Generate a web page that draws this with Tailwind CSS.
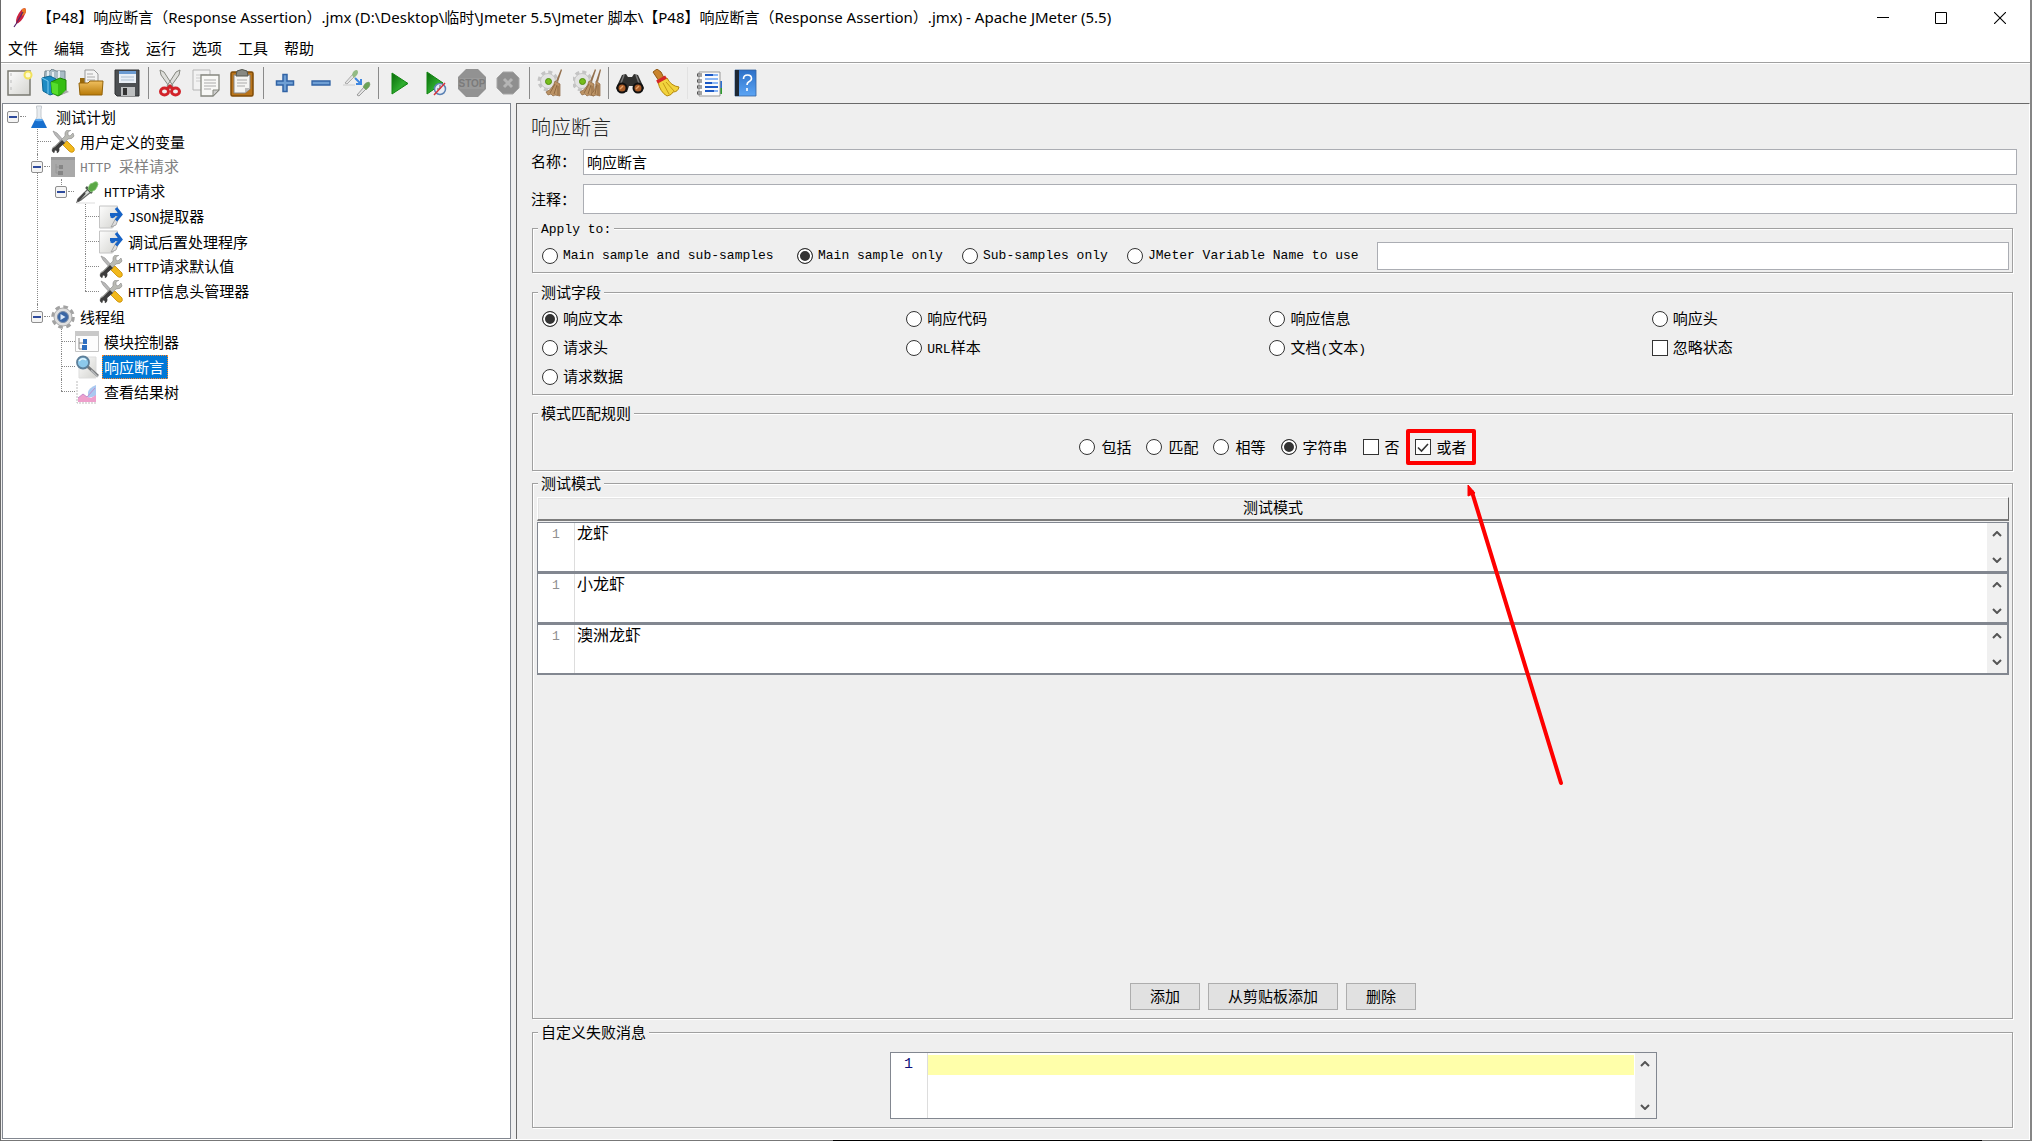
<!DOCTYPE html>
<html lang="zh-CN">
<head>
<meta charset="utf-8">
<meta name="viewport" content="width=device-width, initial-scale=1">
<title>响应断言 - Apache JMeter (5.5)</title>
<script src="https://cdn.jsdelivr.net/npm/@tailwindcss/browser@4"></script>
</head>
<body class="bg-[#efefef] text-black">
<svg class="absolute size-0" aria-hidden="true">
  <defs>
    <linearGradient id="sheet" x1="0" y1="0" x2="1" y2="1"><stop offset="0" stop-color="#fdfdfd"/><stop offset="1" stop-color="#d4d4d0"/></linearGradient>
    <linearGradient id="gold" x1="0" y1="0" x2="0" y2="1"><stop offset="0" stop-color="#f0c060"/><stop offset="1" stop-color="#b87a08"/></linearGradient>
    <linearGradient id="leaf" x1="0" y1="0" x2="1" y2="1"><stop offset="0" stop-color="#0a6a0a"/><stop offset=".6" stop-color="#2fae2f"/><stop offset="1" stop-color="#0c7a0c"/></linearGradient>
    <linearGradient id="book" x1="0" y1="0" x2="0" y2="1"><stop offset="0" stop-color="#2c70c8"/><stop offset="1" stop-color="#5ba4f4"/></linearGradient>
  </defs>
  <symbol id="tools" viewBox="0 0 24 24">
    <path d="M2 1l4 2 8 9-2 2L4 5z" fill="#b8b8b8" stroke="#888" stroke-width=".6"/>
    <path d="M13 13l3-2 7 7q1 3-1 4-2 1-4-1l-6-6z" fill="#f2b91c" stroke="#c78a00" stroke-width=".8"/>
    <path d="M22 3l-3 3-2-1 0-3 3-2q-5-1-6 3v3L4 16q-3 1-3 4 0 2 2 3l1-3 2 1 0 2q3-1 2-5L17 9q5 0 6-3z" fill="#b9bab4" stroke="#888" stroke-width=".6"/>
    <path d="M11 10L4 17q-3 1-3 4l2 2 1-3 2 1v2q3-1 2-5l6-5z" fill="#3d3d3d"/>
  </symbol>
  <symbol id="dropper" viewBox="0 0 24 24">
    <path d="M3 19L13 9l3 3L6 20l-4 2z" fill="#d9ddd9" stroke="#666" stroke-width="1.2"/>
    <path d="M3 21l7-8" stroke="#444" stroke-width="2"/>
    <path d="M11 7l6 6" stroke="#4d5a4d" stroke-width="2.5"/>
    <path d="M14 6q1-3 4-3 2-2 4-1 2 2 0 5-1 3-4 4l-2 1-3-3z" fill="#5aa845" stroke="#8cc77e" stroke-width=".8"/>
    <path d="M2 23h18" stroke="#ddd"/>
  </symbol>
  <symbol id="extract" viewBox="0 0 24 24">
    <path d="M.5 1h18v14l-5 8h-13z" fill="url(#sheet)" stroke="#c4c4c4"/>
    <path d="M12 22l6-11 2 1-3 8z" fill="#ddd" stroke="#999" stroke-width=".8"/>
    <path d="M11 9.500h10M17 3l5 6.500-5 6M16 9q-2 4-4 2" fill="none" stroke="#1763c6" stroke-width="3"/>
  </symbol>
  <symbol id="cog" viewBox="0 0 24 24">
    <circle cx="12" cy="12" r="9.800" fill="none" stroke="#a2a2a2" stroke-width="4" stroke-dasharray="4.400 3.300"/>
    <circle cx="12" cy="12" r="9" fill="#dedede" stroke="#ababab" stroke-width="1"/>
    <circle cx="12" cy="12" r="5.500" fill="#3a66a5" stroke="#7a8da8"/>
    <path d="M9.500 9l5 3-5 3z" fill="#dbe8f8"/>
  </symbol>
  <symbol id="broomy" viewBox="0 0 28 28">
    <circle cx="11" cy="12" r="8" fill="none" stroke="#c4c4c4" stroke-width="5" stroke-dasharray="3.600 2.680"/>
    <circle cx="11" cy="12" r="7.500" fill="#e3e3e3" stroke="#c5c5c5"/>
    <circle cx="11.500" cy="12.500" r="3" fill="#76bd1d" stroke="#528f10"/>
    <path d="M24 0l1 1-4 12-2-1z" fill="#94714e"/>
    <path d="M18 12l5 3v12l-5-1-2 1-2-2-3 1-2-3q7-3 9-11z" fill="#bc9365" stroke="#8d663f" stroke-width=".7"/>
    <path d="M18 15l-5 9M20 16l-3 9M21 17v9" stroke="#85603a" stroke-width=".8"/>
  </symbol>
</svg>

<div class="flex min-h-screen flex-col border-r-2 border-l border-r-[#858585] border-l-[#6a6a6a] bg-[#efefef] font-['Noto_Sans_CJK_SC',sans-serif] text-[15px]">

  <header class="bg-white">
    <div class="flex h-9 items-center pl-3">
      <svg class="mr-2.5 h-5 w-3.5 shrink-0" viewBox="0 0 14 20" aria-hidden="true"><path d="M12 0q2 2 0 6-3 8-9 10Q2 9 9 1z" fill="#cc2340"/><path d="M9 1l3-1q2 3 0 6l-3 2z" fill="#e97824"/><path d="M10 4L3 16l-2 3" fill="none" stroke="#57256b" stroke-width="1.200"/></svg>
      <h1 class="grow pb-0.5 font-['Noto_Sans','Noto_Sans_CJK_SC',sans-serif] text-[15px] leading-5 whitespace-nowrap">【P48】响应断言（Response Assertion）.jmx (D:\Desktop\临时\Jmeter 5.5\Jmeter 脚本\【P48】响应断言（Response Assertion）.jmx) - Apache JMeter (5.5)</h1>
      <button class="flex h-8 w-[58px] items-center justify-center" aria-label="最小化"><svg class="h-3 w-3" viewBox="0 0 12 12"><path d="M0 5.500h12" stroke="#000"/></svg></button>
      <button class="flex h-8 w-[58px] items-center justify-center" aria-label="最大化"><svg class="h-3 w-3" viewBox="0 0 12 12"><path d="M.5.500h11v11H.5z" fill="none" stroke="#000"/></svg></button>
      <button class="flex h-8 w-[60px] items-center justify-center" aria-label="关闭"><svg class="h-3 w-3" viewBox="0 0 12 12"><path d="M0 0l12 12M12 0L0 12" stroke="#000" stroke-width="1.100"/></svg></button>
    </div>
    <nav class="flex h-[27px] items-center gap-4 border-b border-[#a0a0a0] pb-px pl-[7px]">
      <button>文件</button><button>编辑</button><button>查找</button><button>运行</button><button>选项</button><button>工具</button><button>帮助</button>
    </nav>
  </header>

  <div class="flex h-10 items-center border-t border-white pb-px" role="toolbar">
    <button class="flex w-9 justify-center" aria-label="新建"><svg class="size-7" viewBox="0 0 28 28"><path d="M3 2h22v24H3z" fill="url(#sheet)" stroke="#7a7a72" stroke-width="1.500"/><path d="M6 4v20" stroke="#bbb" stroke-dasharray="3 4"/><circle cx="23" cy="6" r="3.500" fill="#fffbd0" stroke="#f2e25a" stroke-width="2"/></svg></button>
    <button class="flex w-9 justify-center" aria-label="模板"><svg class="size-7" viewBox="0 0 28 28"><path d="M4 2h5l2-2 4 2h9v13H3z" fill="#a9bcc6" stroke="#75868e"/><path d="M7 2v6M12 3v6M18 2v8" stroke="#e4ecf0" stroke-width="2"/><path d="M1 9l8-2 6 3v14l-6 2-7-4z" fill="#1c8bc4" stroke="#0c6694"/><path d="M1 9l6 3v13" fill="none" stroke="#7dcbf0"/><path d="M10 13l9-4 6 2v12l-8 4-6-3z" fill="#35bd12" stroke="#1c8205"/><path d="M10 13l7 2v11l-6-2z" fill="#56dd2c"/><path d="M20 26l8-3-3-2z" fill="#aaa"/></svg></button>
    <button class="flex w-9 justify-center" aria-label="打开"><svg class="size-7" viewBox="0 0 28 28"><path d="M3 9h7v4h14l1 12H3z" fill="#98690d"/><path d="M8 1h9l4 4v12H8z" fill="#f4f4f4" stroke="#999"/><path d="M10 5h6M10 8h8M10 11h8" stroke="#aaa"/><path d="M2 14h9l2-2h13l-1 14H3z" fill="url(#gold)" stroke="#946308"/></svg></button>
    <button class="flex w-9 justify-center" aria-label="保存"><svg class="size-7" viewBox="0 0 28 28"><path d="M2 1h24v26H4l-2-2z" fill="#4c4f52" stroke="#2e3032"/><path d="M6 2h17v12H6z" fill="#e9eff6"/><path d="M6 2h17v3H6z" fill="#6b9bd2"/><path d="M8 8h13M8 11h13" stroke="#aebfd0"/><path d="M8 18h14v9H8z" fill="#bdbfc0"/><path d="M10 19h4v7h-4z" fill="#333"/></svg></button>
    <span class="mx-[3px] h-8 w-px bg-[#8a8a8a]"></span>
    <button class="flex w-9 justify-center" aria-label="剪切"><svg class="size-7" viewBox="0 0 28 28"><path d="M4 1l4 2 9 14-2 3L5 6zM24 1l-4 2-9 14 2 3L23 6z" fill="#dedfdb" stroke="#85877f"/><ellipse cx="8.500" cy="22.500" rx="4" ry="3.500" fill="#efefef" stroke="#d2232a" stroke-width="3"/><ellipse cx="19.500" cy="22.500" rx="4" ry="3.500" fill="#efefef" stroke="#d2232a" stroke-width="3"/><path d="M11 20l3-3 3 3" fill="none" stroke="#d2232a" stroke-width="3"/></svg></button>
    <button class="flex w-9 justify-center" aria-label="复制"><svg class="size-7" viewBox="0 0 28 28"><path d="M1 1h17v20H1z" fill="#f2f2f2" stroke="#b5b5b5"/><path d="M4 6h11M4 9h11M4 12h11" stroke="#ccc"/><path d="M9 6h18v15l-6 6H9z" fill="#f8f8f6" stroke="#85877f" stroke-width="1.300"/><path d="M12 11h12M12 14h12M12 17h12M12 20h7" stroke="#aaa"/><path d="M21 27v-6h6z" fill="#ccc" stroke="#85877f"/></svg></button>
    <button class="flex w-9 justify-center" aria-label="粘贴"><svg class="size-7" viewBox="0 0 28 28"><rect x="3" y="3" width="22" height="24" rx="1.500" fill="#b9741b" stroke="#7f4b07" stroke-width="1.500"/><path d="M6 6h16v14l-5 4H6z" fill="#f4f4f2" stroke="#888"/><path d="M9 2q5-3 10 0l1 5H8z" fill="#878983" stroke="#55574f"/><path d="M9 11h10M9 14h10M9 17h8" stroke="#aaa"/><path d="M17 24v-5h5z" fill="#bbb"/></svg></button>
    <span class="mx-[3px] h-8 w-px bg-[#8a8a8a]"></span>
    <button class="flex w-9 justify-center" aria-label="展开"><svg class="size-7" viewBox="0 0 28 28"><path d="M12 5.500h4V12h6.500v4H16v6.500h-4V16H5.500v-4H12z" fill="#6f9fd4" stroke="#3163a5" stroke-width="1.500"/></svg></button>
    <button class="flex w-9 justify-center" aria-label="折叠"><svg class="size-7" viewBox="0 0 28 28"><path d="M5 12h18v4H5z" fill="#6f9fd4" stroke="#3163a5" stroke-width="1.300"/></svg></button>
    <button class="flex w-9 justify-center" aria-label="切换"><svg class="size-7" viewBox="0 0 28 28"><path d="M2 14l8-9 2 2-8 8z" fill="#e4e4e4" stroke="#999" stroke-width=".8"/><path d="M9 6q1-5 5-5 2 2 0 5l-3 3z" fill="#93bb85"/><path d="M0 16h12" stroke="#ccc"/><path d="M12 9l5 5M18 10v5h-5" fill="none" stroke="#3f87e0" stroke-width="2"/><path d="M14 26l7-8 2 2-7 7z" fill="#e4e4e4" stroke="#888" stroke-width=".8"/><path d="M20 18q2-5 6-5 2 2 0 5l-3 3z" fill="#6ba457" stroke="#7d9c72" stroke-width=".6"/></svg></button>
    <span class="mx-[3px] h-8 w-px bg-[#8a8a8a]"></span>
    <button class="flex w-9 justify-center" aria-label="启动"><svg class="size-7" viewBox="0 0 28 28"><path d="M6 4l16 10.500L6 25z" fill="url(#leaf)" stroke="#118511"/></svg></button>
    <button class="flex w-9 justify-center" aria-label="不停顿开始"><svg class="size-7" viewBox="0 0 28 28"><path d="M5 3l16 11L5 25z" fill="url(#leaf)" stroke="#118511"/><circle cx="18" cy="20" r="5.500" fill="#e8edf5" stroke="#5b82b4" stroke-width="1.500"/><path d="M18 16v4h-3" fill="none" stroke="#456"/><path d="M23 14L12 26" stroke="#d8343a" stroke-width="1.500"/></svg></button>
    <button class="flex w-9 justify-center" aria-label="停止"><svg class="size-7" viewBox="0 0 28 28"><path d="M8 0h12l8 8v12l-8 8H8l-8-8V8z" fill="#929292"/><path d="M2 9h24v11H2z" fill="#9a9a9a"/><text x="14" y="18" text-anchor="middle" font-family="Liberation Sans" font-size="10" font-weight="700" fill="#7b7b7b">STOP</text></svg></button>
    <button class="flex w-9 justify-center" aria-label="关闭"><svg class="size-7" viewBox="0 0 28 28"><path d="M9 3h10l6 6v10l-6 6H9l-6-6V9z" fill="#8f8f8f" stroke="#a5a5a5"/><path d="M10 10l8 8M18 10l-8 8" stroke="#b5b5b5" stroke-width="3"/></svg></button>
    <span class="mx-[3px] h-8 w-px bg-[#8a8a8a]"></span>
    <button class="flex w-9 justify-center" aria-label="清除"><svg class="size-7"><use href="#broomy"/></svg></button>
    <button class="flex w-9 justify-center" aria-label="清除全部"><svg class="size-7" viewBox="0 0 28 28"><use href="#broomy" x="-2"/><path d="M27 0l1 1-3 12-2-1z" fill="#94714e"/><path d="M23 12l4 3v12l-4-1-3 1-2-2q5-3 5-13z" fill="#bc9365" stroke="#8d663f" stroke-width=".7"/><path d="M24 15l-2 10M25 16v10" stroke="#85603a" stroke-width=".8"/></svg></button>
    <span class="mx-[3px] h-8 w-px bg-[#8a8a8a]"></span>
    <button class="flex w-9 justify-center" aria-label="查找"><svg class="size-7" viewBox="0 0 28 28"><path d="M6 6l4-1 2 3h4l2-3 4 1 6 13-2 4h-7l-2-6h-4l-2 6H2l-2-4z" fill="#30302e"/><path d="M8 6l-3 8M20 6l3 8" stroke="#777" stroke-width="1.500"/><circle cx="6" cy="19" r="4.500" fill="#a65a26" stroke="#111" stroke-width="2"/><circle cx="22" cy="19" r="4.500" fill="#a65a26" stroke="#111" stroke-width="2"/><path d="M4 20l3-3M20 20l3-3" stroke="#e3a067" stroke-width="1.500"/></svg></button>
    <button class="flex w-9 justify-center" aria-label="重置查找"><svg class="size-7" viewBox="0 0 28 28"><path d="M1 3l4-3 4 3 3 6-5 3z" fill="#c9842d" stroke="#8f5712"/><path d="M6 13l9-4q4 8 12 9-1 5-6 5-1 3-6 4-7-4-9-14z" fill="#f2d33d" stroke="#b5880c"/><path d="M11 14l6 11M14 13l8 9" stroke="#c49a16"/><path d="M5 13l9-5" stroke="#d52727" stroke-width="3.500"/></svg></button>
    <span class="mx-[3px] h-8 w-px bg-[#e2e2e2]"></span>
    <button class="flex w-9 justify-center" aria-label="函数助手"><svg class="size-7" viewBox="0 0 28 28"><path d="M24 12h3v7h-3z" fill="#2b6fd0"/><path d="M24 19h3v6h-3z" fill="#2c9c2c"/><path d="M4 3h21v24H4z" fill="#fafafa" stroke="#999"/><path d="M10 6h8M10 14h7M10 18h13M10 22h9" stroke="#1d59c4" stroke-width="1.800"/><path d="M18 6h5M10 10h13M17 14h6M19 22h4" stroke="#8bb6f5" stroke-width="1.800"/><path d="M2 6h5M2 12h5M2 18h5M2 24h5" stroke="#555" stroke-width="3"/><path d="M3 6h4M3 12h4M3 18h4M3 24h4" stroke="#eee" stroke-width="1"/></svg></button>
    <button class="flex w-9 justify-center" aria-label="帮助"><svg class="size-7" viewBox="0 0 28 28"><path d="M4 1h21v26H4z" fill="url(#book)" stroke="#33639f" stroke-width=".8"/><path d="M4 1h4v26H4z" fill="#1d2733"/><path d="M12.500 10q0-4 4-4t4 3.500q0 2-3 3.500-1.500 1-1.500 3M16 19v3" fill="none" stroke="#fff" stroke-width="1.600"/></svg></button>
  </div>

  <main class="flex grow pl-px">
    <!-- Test plan tree -->
    <aside class="w-[509px] shrink-0 border border-[#828790] bg-white pl-1 leading-[25px]">
      <ul>
        <li class="relative">
          <div class="flex h-[25px] items-center"><button class="flex h-3 w-3 items-center justify-center rounded-xs border border-[#8f8f8f] bg-[#f4f4f4]" aria-label="折叠"><span class="h-0.5 w-2 bg-[#2d4a9c]"></span></button><span class="mx-px w-1.5 border-t border-dotted border-[#888]"></span>
            <svg class="h-6 w-6" viewBox="0 0 24 24"><path d="M9.500 1h5v2l-.5 1v8l5 10H5l5-10V4l-.5-1z" fill="#e8ecef" stroke="#c5cacf"/><path d="M8 15h8l4 8H4z" fill="#1870cf"/><ellipse cx="12" cy="15" rx="4" ry="1.200" fill="#5aa8f0"/></svg><span class="ml-[5px]">测试计划</span></div>
          <ul class="pl-6">
            <li class="relative before:absolute before:top-0 before:left-[6px] before:h-full before:border-l before:border-dotted before:border-[#888]">
              <div class="flex h-[25px] items-center"><span class="ml-[6px] w-3.5 border-t border-dotted border-[#888]"></span><svg class="h-6 w-6"><use href="#tools"/></svg><span class="ml-[5px]">用户定义的变量</span></div>
            </li>
            <li class="relative before:absolute before:top-0 before:left-[6px] before:h-full before:border-l before:border-dotted before:border-[#888]">
              <div class="flex h-[25px] items-center"><button class="relative flex h-3 w-3 items-center justify-center rounded-xs border border-[#8f8f8f] bg-[#f4f4f4]" aria-label="折叠"><span class="h-0.5 w-2 bg-[#2d4a9c]"></span></button><span class="mx-px w-1.5 border-t border-dotted border-[#888]"></span><svg class="h-6 w-6" viewBox="0 0 24 24"><path d="M0 2h24v20H0z" fill="#a9a9a9"/><path d="M0 2h24v3H0z" fill="#9a9a9a"/><path d="M5 9v9h4M5 12h4" fill="none" stroke="#989898"/><path d="M8 10h4v4H8zM7 16h5v4H7z" fill="#858585"/></svg><span class="ml-[5px] whitespace-pre text-[#808080]"><span class="font-['Liberation_Mono',monospace] text-[13px]">HTTP </span>采样请求</span></div>
              <ul class="pl-6">
                <li class="relative before:absolute before:top-0 before:left-[6px] before:h-3 before:border-l before:border-dotted before:border-[#888]">
                  <div class="flex h-[25px] items-center"><button class="relative flex h-3 w-3 items-center justify-center rounded-xs border border-[#8f8f8f] bg-[#f4f4f4]" aria-label="折叠"><span class="h-0.5 w-2 bg-[#2d4a9c]"></span></button><span class="mx-px w-1.5 border-t border-dotted border-[#888]"></span><svg class="h-6 w-6"><use href="#dropper"/></svg><span class="ml-[5px]"><span class="font-['Liberation_Mono',monospace] text-[13px]">HTTP</span>请求</span></div>
                  <ul class="pl-6">
                    <li class="relative before:absolute before:top-0 before:left-[6px] before:h-full before:border-l before:border-dotted before:border-[#888]"><div class="flex h-[25px] items-center"><span class="ml-[6px] w-3.5 border-t border-dotted border-[#888]"></span><svg class="h-6 w-6"><use href="#extract"/></svg><span class="ml-[5px]"><span class="font-['Liberation_Mono',monospace] text-[13px]">JSON</span>提取器</span></div></li>
                    <li class="relative before:absolute before:top-0 before:left-[6px] before:h-full before:border-l before:border-dotted before:border-[#888]"><div class="flex h-[25px] items-center"><span class="ml-[6px] w-3.5 border-t border-dotted border-[#888]"></span><svg class="h-6 w-6"><use href="#extract"/></svg><span class="ml-[5px]">调试后置处理程序</span></div></li>
                    <li class="relative before:absolute before:top-0 before:left-[6px] before:h-full before:border-l before:border-dotted before:border-[#888]"><div class="flex h-[25px] items-center"><span class="ml-[6px] w-3.5 border-t border-dotted border-[#888]"></span><svg class="h-6 w-6"><use href="#tools"/></svg><span class="ml-[5px]"><span class="font-['Liberation_Mono',monospace] text-[13px]">HTTP</span>请求默认值</span></div></li>
                    <li class="relative before:absolute before:top-0 before:left-[6px] before:h-3 before:border-l before:border-dotted before:border-[#888]"><div class="flex h-[25px] items-center"><span class="ml-[6px] w-3.5 border-t border-dotted border-[#888]"></span><svg class="h-6 w-6"><use href="#tools"/></svg><span class="ml-[5px]"><span class="font-['Liberation_Mono',monospace] text-[13px]">HTTP</span>信息头管理器</span></div></li>
                  </ul>
                </li>
              </ul>
            </li>
            <li class="relative before:absolute before:top-0 before:left-[6px] before:h-3 before:border-l before:border-dotted before:border-[#888]">
              <div class="flex h-[25px] items-center"><button class="relative flex h-3 w-3 items-center justify-center rounded-xs border border-[#8f8f8f] bg-[#f4f4f4]" aria-label="折叠"><span class="h-0.5 w-2 bg-[#2d4a9c]"></span></button><span class="mx-px w-1.5 border-t border-dotted border-[#888]"></span><svg class="h-6 w-6"><use href="#cog"/></svg><span class="ml-[5px]">线程组</span></div>
              <ul class="pl-6">
                <li class="relative before:absolute before:top-0 before:left-[6px] before:h-full before:border-l before:border-dotted before:border-[#888]"><div class="flex h-[25px] items-center"><span class="ml-[6px] w-3.5 border-t border-dotted border-[#888]"></span><svg class="h-6 w-6" viewBox="0 0 24 24"><path d="M.5 1.500h23v20H.5z" fill="#fdfdfd" stroke="#c4c4c4"/><path d="M0 1h24v5H0z" fill="#c9c9c9"/><path d="M4 8v11h4M4 13h4" fill="none" stroke="#888"/><path d="M8 9h4v5H8zM7 15h5v5H7z" fill="#2f6fc0"/></svg><span class="ml-[5px]">模块控制器</span></div></li>
                <li class="relative before:absolute before:top-0 before:left-[6px] before:h-full before:border-l before:border-dotted before:border-[#888]"><div class="flex h-[25px] items-center"><span class="ml-[6px] w-3.5 border-t border-dotted border-[#888]"></span><svg class="h-6 w-6" viewBox="0 0 24 24"><path d="M4 2h17v21H4z" fill="url(#sheet)" stroke="#ddd"/><path d="M12 11l11 10" stroke="#77797b" stroke-width="3"/><path d="M16 15l7 7" stroke="#b9bcbe" stroke-width="1.500"/><circle cx="8" cy="7.500" r="6" fill="#8cc9ec" stroke="#5d7f99" stroke-width="1.800"/><path d="M4 6q3-4 7-1" fill="none" stroke="#e5f7ff" stroke-width="1.500"/></svg><span class="ml-[3px] border border-dotted border-[#ff8728] bg-[#0078d7] pr-[3px] pl-px leading-[22px] text-white">响应断言</span></div></li>
                <li class="relative before:absolute before:top-0 before:left-[6px] before:h-3 before:border-l before:border-dotted before:border-[#888]"><div class="flex h-[25px] items-center"><span class="ml-[6px] w-3.5 border-t border-dotted border-[#888]"></span><svg class="h-6 w-6" viewBox="0 0 24 24"><path d="M2 1v22h20" fill="none" stroke="#bbb" stroke-dasharray="2 1"/><path d="M13 12q1-4 8-7v11l-8 2z" fill="#a9c8f0"/><path d="M3 22v-4l5-4 4 3 4 1 5-3v7z" fill="#ee9fcb"/><path d="M3 18l5-4 4 3 8-9" fill="none" stroke="#c48acb"/></svg><span class="ml-[5px]">查看结果树</span></div></li>
              </ul>
            </li>
          </ul>
        </li>
      </ul>
    </aside>

    <!-- Response assertion editor -->
    <form class="ml-[5px] flex min-w-0 grow flex-col border-t border-r border-l border-t-[#696969] border-r-white border-l-[#696969] pt-2 pr-3 pb-[11px] pl-3.5">
      <h2 class="text-xl leading-[30px] font-light text-[#222]">响应断言</h2>
      <div class="mt-[7px] flex h-[26px] items-center"><label for="name" class="w-[52px] pb-0.5 whitespace-nowrap">名称：</label><input id="name" type="text" value="响应断言" class="h-full min-w-0 grow border border-[#abadb3] bg-white px-[3px] pb-0.5"></div>
      <div class="mt-[9px] flex h-[30px] items-center"><label for="comment" class="w-[52px] whitespace-nowrap">注释：</label><input id="comment" type="text" class="h-full min-w-0 grow border border-[#abadb3] bg-white px-[3px] pb-0.5"></div>

      <fieldset class="mt-1.5 mr-1 ml-px border border-[#a0a0a0] pt-[5px] pr-[3px] pb-0.5 pl-1 shadow-[1px_1px_0_#fff,inset_1px_1px_0_#fff]">
        <legend class="ml-px h-[17px] bg-[#efefef] px-[3px] font-['Liberation_Mono',monospace] text-[13px] leading-[19px]">Apply to:</legend>
        <div class="flex h-7 items-center gap-[18px] pl-[5px] font-['Liberation_Mono',monospace] text-[13px] whitespace-nowrap">
          <label class="flex w-[237px] items-center gap-[5px]"><input type="radio" name="scope" class="size-4 appearance-none rounded-full border border-[#333] bg-white checked:bg-[#333] checked:shadow-[inset_0_0_0_2px_#fff]">Main sample and sub-samples</label>
          <label class="flex w-[147px] items-center gap-[5px]"><input type="radio" name="scope" checked class="size-4 appearance-none rounded-full border border-[#333] bg-white checked:bg-[#333] checked:shadow-[inset_0_0_0_2px_#fff]">Main sample only</label>
          <label class="flex w-[147px] items-center gap-[5px]"><input type="radio" name="scope" class="size-4 appearance-none rounded-full border border-[#333] bg-white checked:bg-[#333] checked:shadow-[inset_0_0_0_2px_#fff]">Sub-samples only</label>
          <label class="flex w-[232px] items-center gap-[5px]"><input type="radio" name="scope" class="size-4 appearance-none rounded-full border border-[#333] bg-white checked:bg-[#333] checked:shadow-[inset_0_0_0_2px_#fff]">JMeter Variable Name to use</label>
          <input type="text" aria-label="JMeter Variable Name" class="h-full min-w-0 grow border border-[#abadb3] bg-white px-[3px]">
        </div>
      </fieldset>

      <fieldset class="mt-[11px] mr-1 ml-px border border-[#a0a0a0] pt-[3px] pr-[3px] pb-[3px] pl-1 shadow-[1px_1px_0_#fff,inset_1px_1px_0_#fff]">
        <legend class="ml-px h-[17px] bg-[#efefef] px-[3px] leading-[15px]">测试字段</legend>
        <div class="grid auto-rows-[29px] grid-cols-[364fr_363fr_382fr_357fr] items-center pl-[5px]">
          <label class="flex items-center gap-[5px]"><input type="radio" name="field" checked class="size-4 appearance-none rounded-full border border-[#333] bg-white checked:bg-[#333] checked:shadow-[inset_0_0_0_2px_#fff]">响应文本</label>
          <label class="flex items-center gap-[5px]"><input type="radio" name="field" class="size-4 appearance-none rounded-full border border-[#333] bg-white checked:bg-[#333] checked:shadow-[inset_0_0_0_2px_#fff]">响应代码</label>
          <label class="flex items-center gap-[5px]"><input type="radio" name="field" class="size-4 appearance-none rounded-full border border-[#333] bg-white checked:bg-[#333] checked:shadow-[inset_0_0_0_2px_#fff]">响应信息</label>
          <label class="flex items-center gap-[5px]"><input type="radio" name="field" class="size-4 appearance-none rounded-full border border-[#333] bg-white checked:bg-[#333] checked:shadow-[inset_0_0_0_2px_#fff]">响应头</label>
          <label class="flex items-center gap-[5px]"><input type="radio" name="field" class="size-4 appearance-none rounded-full border border-[#333] bg-white checked:bg-[#333] checked:shadow-[inset_0_0_0_2px_#fff]">请求头</label>
          <label class="flex items-center gap-[5px]"><input type="radio" name="field" class="size-4 appearance-none rounded-full border border-[#333] bg-white checked:bg-[#333] checked:shadow-[inset_0_0_0_2px_#fff]"><span><span class="font-['Liberation_Mono',monospace] text-[13px]">URL</span>样本</span></label>
          <label class="flex items-center gap-[5px]"><input type="radio" name="field" class="size-4 appearance-none rounded-full border border-[#333] bg-white checked:bg-[#333] checked:shadow-[inset_0_0_0_2px_#fff]"><span>文档<span class="font-['Liberation_Mono',monospace] text-[13px]">(</span>文本<span class="font-['Liberation_Mono',monospace] text-[13px]">)</span></span></label>
          <label class="flex items-center gap-[5px]"><input type="checkbox" class="size-4 appearance-none border border-[#333] bg-white">忽略状态</label>
          <label class="flex items-center gap-[5px]"><input type="radio" name="field" class="size-4 appearance-none rounded-full border border-[#333] bg-white checked:bg-[#333] checked:shadow-[inset_0_0_0_2px_#fff]">请求数据</label>
        </div>
      </fieldset>

      <fieldset class="mt-2.5 mr-1 ml-px border border-[#a0a0a0] pt-[9px] pr-[3px] pb-[7px] pl-1 shadow-[1px_1px_0_#fff,inset_1px_1px_0_#fff]">
        <legend class="ml-px h-[17px] bg-[#efefef] px-[3px] leading-[15px]">模式匹配规则</legend>
        <div class="flex h-8 items-center justify-center gap-[15px]">
          <label class="flex items-center gap-1.5"><input type="radio" name="rule" class="size-4 appearance-none rounded-full border border-[#333] bg-white checked:bg-[#333] checked:shadow-[inset_0_0_0_2px_#fff]">包括</label>
          <label class="flex items-center gap-1.5"><input type="radio" name="rule" class="size-4 appearance-none rounded-full border border-[#333] bg-white checked:bg-[#333] checked:shadow-[inset_0_0_0_2px_#fff]">匹配</label>
          <label class="flex items-center gap-1.5"><input type="radio" name="rule" class="size-4 appearance-none rounded-full border border-[#333] bg-white checked:bg-[#333] checked:shadow-[inset_0_0_0_2px_#fff]">相等</label>
          <label class="flex items-center gap-1.5"><input type="radio" name="rule" checked class="size-4 appearance-none rounded-full border border-[#333] bg-white checked:bg-[#333] checked:shadow-[inset_0_0_0_2px_#fff]">字符串</label>
          <label class="flex items-center gap-1.5"><input type="checkbox" class="size-4 appearance-none border border-[#333] bg-white">否</label>
          <label class="relative flex items-center gap-1.5"><input type="checkbox" checked class="peer size-4 appearance-none border border-[#333] bg-white"><svg class="pointer-events-none absolute left-0 hidden size-4 peer-checked:block" viewBox="0 0 16 16"><path d="M3 8.500l3.500 3.500L13 5" fill="none" stroke="#333" stroke-width="1.600"/></svg>或者
            <span class="pointer-events-none absolute -inset-x-[9px] -inset-y-[7px] rounded-xs border-4 border-[#fe0000]"></span>
            <svg class="pointer-events-none absolute top-[48px] left-[52px] z-10 h-[304px] w-[100px]" viewBox="0 0 100 304" aria-hidden="true"><path d="M5 8L94 299" stroke="#fe0000" stroke-width="4" stroke-linecap="round"/><path d="M1 1l7 8-7 3z" fill="#fe0000" stroke="#fe0000"/></svg>
          </label>
        </div>
      </fieldset>

      <fieldset class="mt-1 mr-1 ml-px flex grow flex-col border border-[#a0a0a0] pt-[5px] pr-[3px] pb-2 pl-1 shadow-[1px_1px_0_#fff,inset_1px_1px_0_#fff]">
        <legend class="ml-px h-[17px] bg-[#efefef] px-[3px] leading-[15px]">测试模式</legend>
        <table class="w-full border-separate border-spacing-0">
          <thead><tr><th class="h-6 border-t border-r border-b-2 border-l border-t-white border-r-[#696969] border-b-[#7c7c7c] border-l-white p-0 align-top leading-[18px] font-normal shadow-[inset_1px_1px_0_#e3e3e3]">测试模式</th></tr></thead>
          <tbody>
            <tr><td class="p-0 pt-px"><div class="flex h-[51px] border-t border-r-2 border-b-2 border-l border-[#828790] bg-white"><span class="w-[37px] shrink-0 border-r border-[#ddd] pt-0.5 text-center font-['Liberation_Mono',monospace] text-[13px] text-[#909090]">1</span><textarea aria-label="模式 1" class="min-w-0 grow resize-none overflow-hidden px-0.5 text-base leading-[18px]">龙虾</textarea><span class="flex w-5 flex-col items-center justify-between bg-[#f0f0f0] py-2"><svg class="h-1.5 w-2.5" viewBox="0 0 10 6"><path d="M1 5l4-4 4 4" fill="none" stroke="#555" stroke-width="2"/></svg><svg class="h-1.5 w-2.5" viewBox="0 0 10 6"><path d="M1 1l4 4 4-4" fill="none" stroke="#555" stroke-width="2"/></svg></span></div></td></tr>
            <tr><td class="p-0"><div class="flex h-[51px] border-t border-r-2 border-b-2 border-l border-[#828790] bg-white"><span class="w-[37px] shrink-0 border-r border-[#ddd] pt-0.5 text-center font-['Liberation_Mono',monospace] text-[13px] text-[#909090]">1</span><textarea aria-label="模式 2" class="min-w-0 grow resize-none overflow-hidden px-0.5 text-base leading-[18px]">小龙虾</textarea><span class="flex w-5 flex-col items-center justify-between bg-[#f0f0f0] py-2"><svg class="h-1.5 w-2.5" viewBox="0 0 10 6"><path d="M1 5l4-4 4 4" fill="none" stroke="#555" stroke-width="2"/></svg><svg class="h-1.5 w-2.5" viewBox="0 0 10 6"><path d="M1 1l4 4 4-4" fill="none" stroke="#555" stroke-width="2"/></svg></span></div></td></tr>
            <tr><td class="p-0"><div class="flex h-[51px] border-t border-r-2 border-b-2 border-l border-[#828790] bg-white"><span class="w-[37px] shrink-0 border-r border-[#ddd] pt-0.5 text-center font-['Liberation_Mono',monospace] text-[13px] text-[#909090]">1</span><textarea aria-label="模式 3" class="min-w-0 grow resize-none overflow-hidden px-0.5 text-base leading-[18px]">澳洲龙虾</textarea><span class="flex w-5 flex-col items-center justify-between bg-[#f0f0f0] py-2"><svg class="h-1.5 w-2.5" viewBox="0 0 10 6"><path d="M1 5l4-4 4 4" fill="none" stroke="#555" stroke-width="2"/></svg><svg class="h-1.5 w-2.5" viewBox="0 0 10 6"><path d="M1 1l4 4 4-4" fill="none" stroke="#555" stroke-width="2"/></svg></span></div></td></tr>
          </tbody>
        </table>
        <div class="mt-auto flex justify-center gap-2">
          <button type="button" class="h-[27px] border border-[#adadad] bg-[#e1e1e1] px-[19px] pb-0.5 leading-5">添加</button>
          <button type="button" class="h-[27px] border border-[#adadad] bg-[#e1e1e1] px-[19px] pb-0.5 leading-5">从剪贴板添加</button>
          <button type="button" class="h-[27px] border border-[#adadad] bg-[#e1e1e1] px-[19px] pb-0.5 leading-5">删除</button>
        </div>
      </fieldset>

      <fieldset class="mt-[5px] mr-1 ml-px border border-[#a0a0a0] pt-[11px] pr-[3px] pb-2 pl-1 shadow-[1px_1px_0_#fff,inset_1px_1px_0_#fff]">
        <legend class="ml-px h-[17px] bg-[#efefef] px-[3px] leading-[15px]">自定义失败消息</legend>
        <div class="mx-auto flex h-[67px] w-[767px] max-w-full border border-[#828790] bg-white"><span class="w-[37px] shrink-0 border-r border-[#ddd] pt-0.5 text-center font-['Liberation_Mono',monospace] text-[15px] leading-5 text-[#10107c]">1</span><textarea aria-label="自定义失败消息" class="mt-0.5 mr-px h-5 min-w-0 grow resize-none overflow-hidden bg-[#ffffaa] px-[3px] leading-5"></textarea><span class="flex w-[21px] flex-col items-center justify-between bg-[#f0f0f0] py-2"><svg class="h-1.5 w-2.5" viewBox="0 0 10 6"><path d="M1 5l4-4 4 4" fill="none" stroke="#555" stroke-width="2"/></svg><svg class="h-1.5 w-2.5" viewBox="0 0 10 6"><path d="M1 1l4 4 4-4" fill="none" stroke="#555" stroke-width="2"/></svg></span></div>
      </fieldset>
    </form>
  </main>
  <div class="flex h-0.5 border-t border-white"><span class="w-[41%] bg-[#777]"></span><span class="grow bg-black"></span><span class="w-12 bg-[#777]"></span></div>
</div>
</body>
</html>
